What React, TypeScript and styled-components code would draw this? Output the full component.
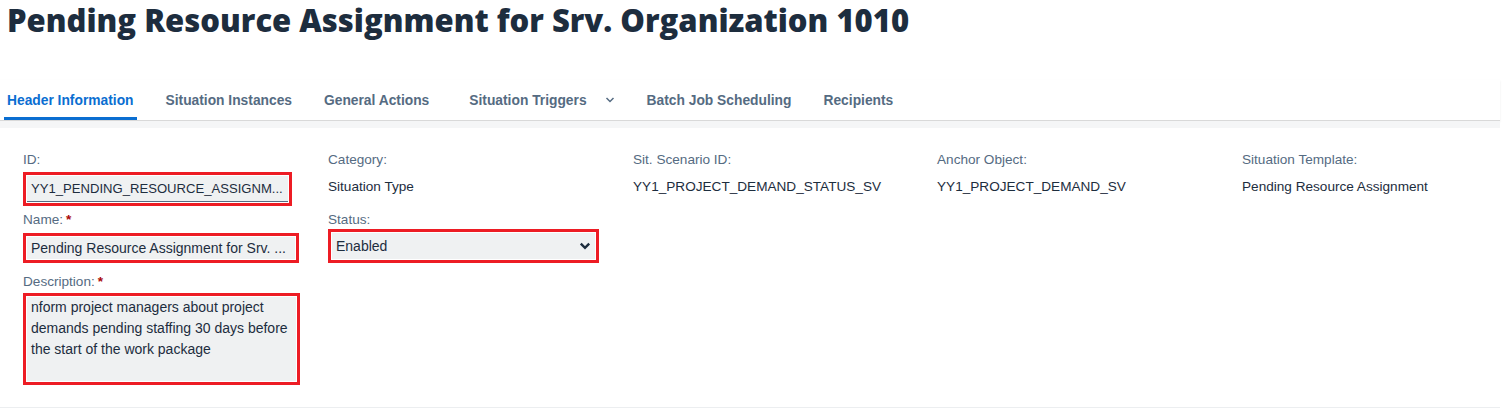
import styled, { createGlobalStyle } from "styled-components";

const GlobalStyle = createGlobalStyle`
    body {
        margin: 0;
        background: #fff;
        font-family: "Liberation Sans", Arial, sans-serif;
        color: #1d2d3e;
    }
`;

const Page = styled.div`
    width: 1500px;
`;

const Title = styled.h1`
    margin: 0;
    padding-left: 7px;
    height: 40px;
    line-height: 40px;
    font-family: "Open Sans", Lato, sans-serif;
    font-weight: 800;
    font-size: 31px;
    color: #1d2d3e;
    white-space: nowrap;
`;

const TabBar = styled.div`
    margin-top: 40px;
    height: 40px;
    display: flex;
    align-items: stretch;
    gap: 26px;
    padding-left: 4px;
    border-bottom: 1px solid #d9d9d9;
    box-shadow: 0 1px 2px rgba(0, 0, 0, 0.08);
`;

const Tab = styled.div<{ $active?: boolean; $extra?: number }>`
    display: flex;
    align-items: center;
    gap: 18px;
    padding: 3px 3px 0 ${(p) => 3 + (p.$extra || 0)}px;
    font-size: 13.8px;
    font-weight: 700;
    color: ${(p) => (p.$active ? "#0a6ed1" : "#556b82")};
    border-bottom: 3px solid ${(p) => (p.$active ? "#0a6ed1" : "transparent")};
    box-sizing: border-box;
    white-space: nowrap;
`;

const Band = styled.div`
    height: 7px;
    background: #f5f6f7;
`;

const Content = styled.div`
    height: 280px;
    border-bottom: 1px solid #eceef0;
    padding: 22px 0 0 23px;
    box-sizing: border-box;
    display: grid;
    grid-template-columns: 305px 305px 304px 305px 240px;
    font-size: 13.6px;
`;

const Column = styled.div`
    display: flex;
    flex-direction: column;
`;

const Label = styled.div<{ $top?: number }>`
    line-height: 20px;
    color: #556b82;
    margin-top: ${(p) => p.$top || 0}px;
    white-space: nowrap;
`;

const Required = styled.span`
    color: #aa0808;
    font-weight: 700;
    margin-left: 3px;
`;

const Value = styled.div`
    line-height: 20px;
    margin-top: 7px;
    color: #1d2d3e;
    white-space: nowrap;
`;

const Marked = styled.div<{ $top: number; $width: number }>`
    margin-top: ${(p) => p.$top}px;
    width: ${(p) => p.$width}px;
    border: 3px solid #ed1c24;
    padding: 1px;
    box-sizing: border-box;
    background: #fff;
`;

const Input = styled.div<{ $height: number; $underline?: boolean; $size?: number }>`
    height: ${(p) => p.$height}px;
    background: #eff1f2;
    color: #1d2d3e;
    font-size: ${(p) => p.$size || 14}px;
    padding: 0 4px;
    display: flex;
    align-items: center;
    justify-content: space-between;
    box-sizing: border-box;
    border-bottom: ${(p) => (p.$underline ? "1px solid #556b82" : "none")};
    white-space: nowrap;
    overflow: hidden;
`;

const Area = styled.div`
    height: 84px;
    background: #eff1f2;
    font-size: 14px;
    line-height: 21px;
    color: #1d2d3e;
    padding: 0 4px;
    box-sizing: border-box;
`;

const Chevron = ({ size = 10, bold = false }: { size?: number; bold?: boolean }) => (
    <svg width={size} height={size} viewBox="0 0 10 10">
        <polyline
            points="1.5,3 5,6.5 8.5,3"
            fill="none"
            stroke={bold ? "#1d2d3e" : "#556b82"}
            strokeWidth={bold ? 2 : 1.5}
        />
    </svg>
);

const tabs = [
    "Header Information",
    "Situation Instances",
    "General Actions",
    "Situation Triggers",
    "Batch Job Scheduling",
    "Recipients",
];

export default function App() {
    return (
        <Page>
            <GlobalStyle />
            <Title>Pending Resource Assignment for Srv. Organization 1010</Title>
            <TabBar>
                {tabs.map((t, i) => (
                    <Tab key={t} $active={i === 0} $extra={t === "Situation Triggers" ? 8 : 0}>
                        {t}
                        {t === "Situation Triggers" && <Chevron />}
                    </Tab>
                ))}
            </TabBar>
            <Band />
            <Content>
                <Column>
                    <Label>ID:</Label>
                    <Marked $top={2} $width={269}>
                        <Input $height={26} $underline $size={13.1}>
                            YY1_PENDING_RESOURCE_ASSIGNM...
                        </Input>
                    </Marked>
                    <Label $top={4}>
                        Name:<Required>*</Required>
                    </Label>
                    <Marked $top={3} $width={276}>
                        <Input $height={22}>Pending Resource Assignment for Srv. ...</Input>
                    </Marked>
                    <Label $top={9}>
                        Description:<Required>*</Required>
                    </Label>
                    <Marked $top={1} $width={277}>
                        <Area>
                            nform project managers about project demands pending staffing 30
                            days before the start of the work package
                        </Area>
                    </Marked>
                </Column>
                <Column>
                    <Label>Category:</Label>
                    <Value>Situation Type</Value>
                    <Label $top={13}>Status:</Label>
                    <Marked $top={-1} $width={271}>
                        <Input $height={26}>
                            Enabled
                            <Chevron size={12} bold />
                        </Input>
                    </Marked>
                </Column>
                <Column>
                    <Label>Sit. Scenario ID:</Label>
                    <Value>YY1_PROJECT_DEMAND_STATUS_SV</Value>
                </Column>
                <Column>
                    <Label>Anchor Object:</Label>
                    <Value>YY1_PROJECT_DEMAND_SV</Value>
                </Column>
                <Column>
                    <Label>Situation Template:</Label>
                    <Value>Pending Resource Assignment</Value>
                </Column>
            </Content>
        </Page>
    );
}
